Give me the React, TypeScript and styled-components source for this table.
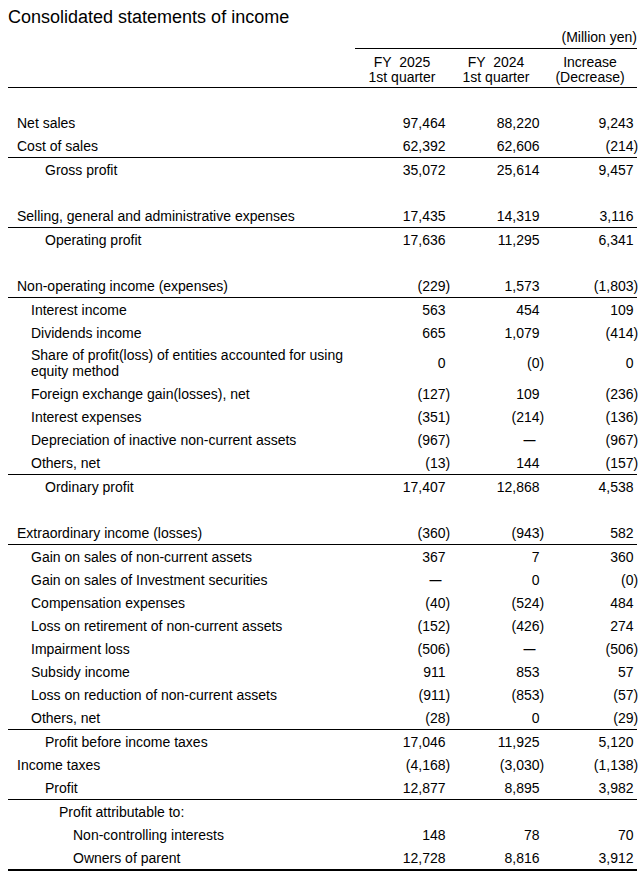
import React from "react";
import styled, { createGlobalStyle } from "styled-components";

const GlobalStyle = createGlobalStyle`
  html, body { margin: 0; padding: 0; background: #fff; }
  body { font-family: "Liberation Sans", Arial, sans-serif; color: #000; }
`;

const Page = styled.div`
  width: 629px;
  padding: 6px 0 0 8px;
  font-family: "Liberation Sans", Arial, sans-serif;
  font-size: 14px;
  color: #000;
`;

const Title = styled.h1`
  margin: 0;
  font-size: 18px;
  font-weight: 400;
  line-height: 22px;
`;

const Unit = styled.div`
  text-align: right;
  line-height: 18px;
  padding-bottom: 2px;
`;

const Grid = styled.div`
  display: grid;
  grid-template-columns: 347px repeat(3, 94px);
`;

const HeaderRow = styled(Grid)`
  border-bottom: 1px solid #000;
`;

const HeaderCell = styled.div`
  border-top: 1px solid #000;
  padding: 6px 0 2px;
  line-height: 15px;
  text-align: center;
  white-space: pre;
`;

const Row = styled(Grid)<{ $rule?: "thin" | "thick"; $tall?: boolean }>`
  min-height: ${(p) => (p.$tall ? "38px" : "23px")};
  align-items: center;
  border-bottom: ${(p) =>
    p.$rule === "thick" ? "2px solid #000" : p.$rule === "thin" ? "1px solid #000" : "none"};
`;

const Spacer = styled.div`
  height: 23px;
`;

const Label = styled.div<{ $level: number }>`
  padding-left: ${(p) => 9 + p.$level * 14}px;
  line-height: 16px;
`;

const Num = styled.div`
  text-align: right;
  padding-right: 3.5px;
  white-space: nowrap;
  line-height: 16px;
`;

const Hang = styled.span`
  display: inline-block;
  width: 0;
`;

const Dash = styled.span`
  display: inline-block;
  padding-right: 4px;
  font-size: 12px;
  font-weight: 700;
`;

type Line = {
  label?: React.ReactNode;
  level?: number;
  values?: string[];
  rule?: "thin" | "thick";
  tall?: boolean;
  spacer?: boolean;
};

const rows: Line[] = [
  { spacer: true },
  { label: "Net sales", level: 0, values: ["97,464", "88,220", "9,243"] },
  { label: "Cost of sales", level: 0, values: ["62,392", "62,606", "(214)"], rule: "thin" },
  { label: "Gross profit", level: 2, values: ["35,072", "25,614", "9,457"] },
  { spacer: true },
  { label: "Selling, general and administrative expenses", level: 0, values: ["17,435", "14,319", "3,116"], rule: "thin" },
  { label: "Operating profit", level: 2, values: ["17,636", "11,295", "6,341"] },
  { spacer: true },
  { label: "Non-operating income (expenses)", level: 0, values: ["(229)", "1,573", "(1,803)"], rule: "thin" },
  { label: "Interest income", level: 1, values: ["563", "454", "109"] },
  { label: "Dividends income", level: 1, values: ["665", "1,079", "(414)"] },
  {
    label: (
      <>
        Share of profit(loss) of entities accounted for using
        <br />
        equity method
      </>
    ),
    level: 1,
    values: ["0", "(0)", "0"],
    tall: true,
  },
  { label: "Foreign exchange gain(losses), net", level: 1, values: ["(127)", "109", "(236)"] },
  { label: "Interest expenses", level: 1, values: ["(351)", "(214)", "(136)"] },
  { label: "Depreciation of inactive non-current assets", level: 1, values: ["(967)", "—", "(967)"] },
  { label: "Others, net", level: 1, values: ["(13)", "144", "(157)"], rule: "thin" },
  { label: "Ordinary profit", level: 2, values: ["17,407", "12,868", "4,538"] },
  { spacer: true },
  { label: "Extraordinary income (losses)", level: 0, values: ["(360)", "(943)", "582"], rule: "thin" },
  { label: "Gain on sales of non-current assets", level: 1, values: ["367", "7", "360"] },
  { label: "Gain on sales of Investment securities", level: 1, values: ["—", "0", "(0)"] },
  { label: "Compensation expenses", level: 1, values: ["(40)", "(524)", "484"] },
  { label: "Loss on retirement of non-current assets", level: 1, values: ["(152)", "(426)", "274"] },
  { label: "Impairment loss", level: 1, values: ["(506)", "—", "(506)"] },
  { label: "Subsidy income", level: 1, values: ["911", "853", "57"] },
  { label: "Loss on reduction of non-current assets", level: 1, values: ["(911)", "(853)", "(57)"] },
  { label: "Others, net", level: 1, values: ["(28)", "0", "(29)"], rule: "thin" },
  { label: "Profit before income taxes", level: 2, values: ["17,046", "11,925", "5,120"] },
  { label: "Income taxes", level: 0, values: ["(4,168)", "(3,030)", "(1,138)"] },
  { label: "Profit", level: 2, values: ["12,877", "8,895", "3,982"], rule: "thin" },
  { label: "Profit attributable to:", level: 3 },
  { label: "Non-controlling interests", level: 4, values: ["148", "78", "70"] },
  { label: "Owners of parent", level: 4, values: ["12,728", "8,816", "3,912"], rule: "thick" },
];

function Value({ v }: { v: string }) {
  if (v === "—") return <Dash>—</Dash>;
  if (v.endsWith(")")) {
    return (
      <>
        {v.slice(0, -1)}
        <Hang>)</Hang>
      </>
    );
  }
  return <>{v}</>;
}

export default function App() {
  return (
    <>
      <GlobalStyle />
      <Page>
        <Title>Consolidated statements of income</Title>
        <Unit>(Million yen)</Unit>
        <HeaderRow>
          <div />
          <HeaderCell>{"FY  2025\n1st quarter"}</HeaderCell>
          <HeaderCell>{"FY  2024\n1st quarter"}</HeaderCell>
          <HeaderCell>{"Increase\n(Decrease)"}</HeaderCell>
        </HeaderRow>
        {rows.map((r, i) =>
          r.spacer ? (
            <Spacer key={i} />
          ) : (
            <Row key={i} $rule={r.rule} $tall={r.tall}>
              <Label $level={r.level ?? 0}>{r.label}</Label>
              {(r.values ?? ["", "", ""]).map((v, j) => (
                <Num key={j}>
                  <Value v={v} />
                </Num>
              ))}
            </Row>
          )
        )}
      </Page>
    </>
  );
}
